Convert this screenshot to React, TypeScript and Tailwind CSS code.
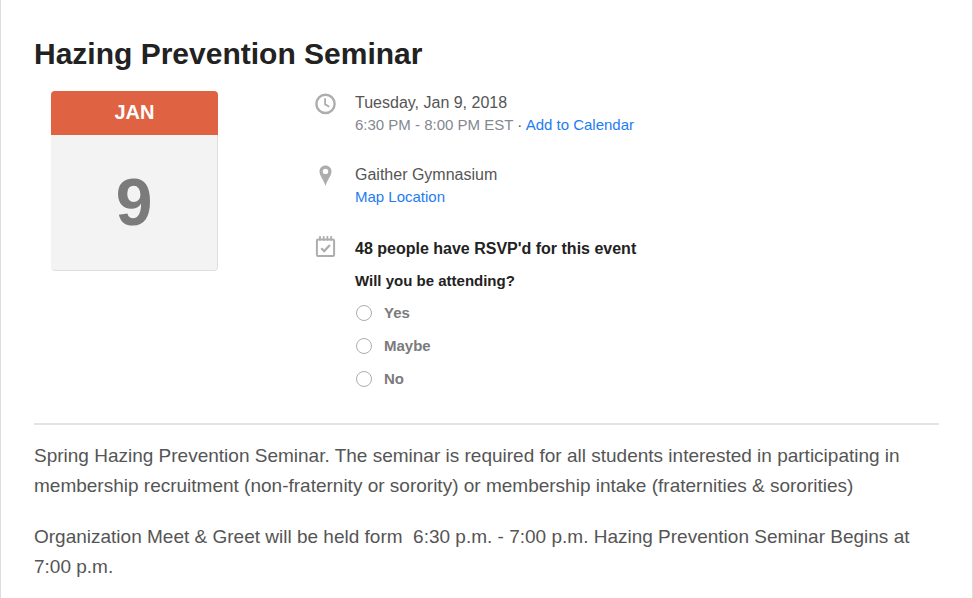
import type { ReactNode } from "react"

const RSVP_OPTIONS = ["Yes", "Maybe", "No"]

const ClockIcon = () => (
	<svg width="22" height="24" viewBox="0 0 22 24" fill="none" stroke="#adadad" aria-hidden="true">
		<circle cx="11.5" cy="11.9" r="9.1" strokeWidth="2.4" />
		<path d="M11.1 6.2v6.2l4.2 2.4" strokeWidth="1.8" />
	</svg>
)

const PinIcon = () => (
	<svg width="22" height="24" viewBox="0 0 22 24" fill="#adadad" aria-hidden="true">
		<path
			fillRule="evenodd"
			d="M11.5 1.6c-3.4 0-6 2.6-6 5.9 0 4.2 4.2 8.2 6 14.5 1.8-6.3 6-10.3 6-14.5 0-3.3-2.6-5.9-6-5.9zm0 3.1a2.7 2.7 0 1 1 0 5.4 2.7 2.7 0 0 1 0-5.4z"
		/>
	</svg>
)

const CalendarIcon = () => (
	<svg width="22" height="24" viewBox="0 0 22 24" fill="none" stroke="#adadad" aria-hidden="true">
		<rect x="2.9" y="3.4" width="17.2" height="16.6" rx="1.2" strokeWidth="2" />
		<path d="M6 0v4.8M9.7 0v4.8M13.4 0v4.8M17.1 0v4.8" strokeWidth="1.7" />
		<path d="M7.2 12.2l3 2.9 5.7-6.2" strokeWidth="2.2" />
	</svg>
)

const DateCard = ({ month, day }: { month: string; day: number }) => (
	<div className="w-[167px] h-[180px] flex flex-col rounded-[4px] overflow-hidden text-center font-bold">
		<div className="h-11 bg-[#df6342] text-white text-[20px] leading-[42px]">{month}</div>
		<div className="grow bg-[#f3f3f3] border-r border-b border-[#dedede] rounded-b-[4px] text-[#7b7b7b] text-[66px] leading-[134px]">
			{day}
		</div>
	</div>
)

const DetailRow = ({ icon, children }: { icon: ReactNode; children: ReactNode }) => (
	<div className="flex gap-[19px]">
		<div className="shrink-0 w-[22px]">{icon}</div>
		<div>{children}</div>
	</div>
)

const Rsvp = () => (
	<form className="flex flex-col gap-[10px] pt-0.5 font-bold">
		<p className="text-[#222222] text-base leading-[22px]">48 people have RSVP'd for this event</p>
		<fieldset>
			<legend className="text-[#222222] mb-[10px]">Will you be attending?</legend>
			<div className="flex flex-col gap-[11px] text-[#7b7b7b]">
				{RSVP_OPTIONS.map((option) => (
					<label key={option} className="flex items-center gap-3">
						<input
							type="radio"
							name="rsvp"
							value={option}
							className="appearance-none size-4 ml-px rounded-full border border-[#adadad] bg-white checked:border-4"
						/>
						{option}
					</label>
				))}
			</div>
		</fieldset>
	</form>
)

const App = () => {
	return (
		<main className="min-h-screen bg-white border-x border-[#dddddd] px-[33px] pt-9 font-['Liberation_Sans',Arial,sans-serif]">
			<h1 className="text-[30px] leading-9 font-bold text-[#222222]">Hazing Prevention Seminar</h1>
			<section className="flex mt-[19px]">
				<div className="shrink-0 w-[280px] pl-[17px]">
					<DateCard month="JAN" day={9} />
				</div>
				<div className="flex flex-col gap-7 pt-px text-[15px] leading-[22px]">
					<DetailRow icon={<ClockIcon />}>
						<p className="text-base leading-[22px] text-[#555555]">Tuesday, Jan 9, 2018</p>
						<p className="text-[#838891]">
							6:30 PM - 8:00 PM EST <span className="text-[#4c4c4c]">·</span>{" "}
							<a href="#calendar" className="text-[#1d7cf2]">
								Add to Calendar
							</a>
						</p>
					</DetailRow>
					<DetailRow icon={<PinIcon />}>
						<p className="text-base leading-[22px] text-[#555555]">Gaither Gymnasium</p>
						<a href="#map" className="text-[#1d7cf2]">
							Map Location
						</a>
					</DetailRow>
					<DetailRow icon={<CalendarIcon />}>
						<Rsvp />
					</DetailRow>
				</div>
			</section>
			<hr className="mt-[33px] border-t-2 border-[#e3e3e3]" />
			<div className="flex flex-col gap-[21px] mt-4 text-[19px] leading-[30px] text-[#555555]">
				<p>
					Spring Hazing Prevention Seminar. The seminar is required for all students interested in participating in
					membership recruitment (non-fraternity or sorority) or membership intake (fraternities &amp; sororities)
				</p>
				<p>
					Organization Meet &amp; Greet will be held form &nbsp;6:30 p.m. - 7:00 p.m. Hazing Prevention Seminar Begins at
					7:00 p.m.
				</p>
			</div>
		</main>
	)
}

export default App
